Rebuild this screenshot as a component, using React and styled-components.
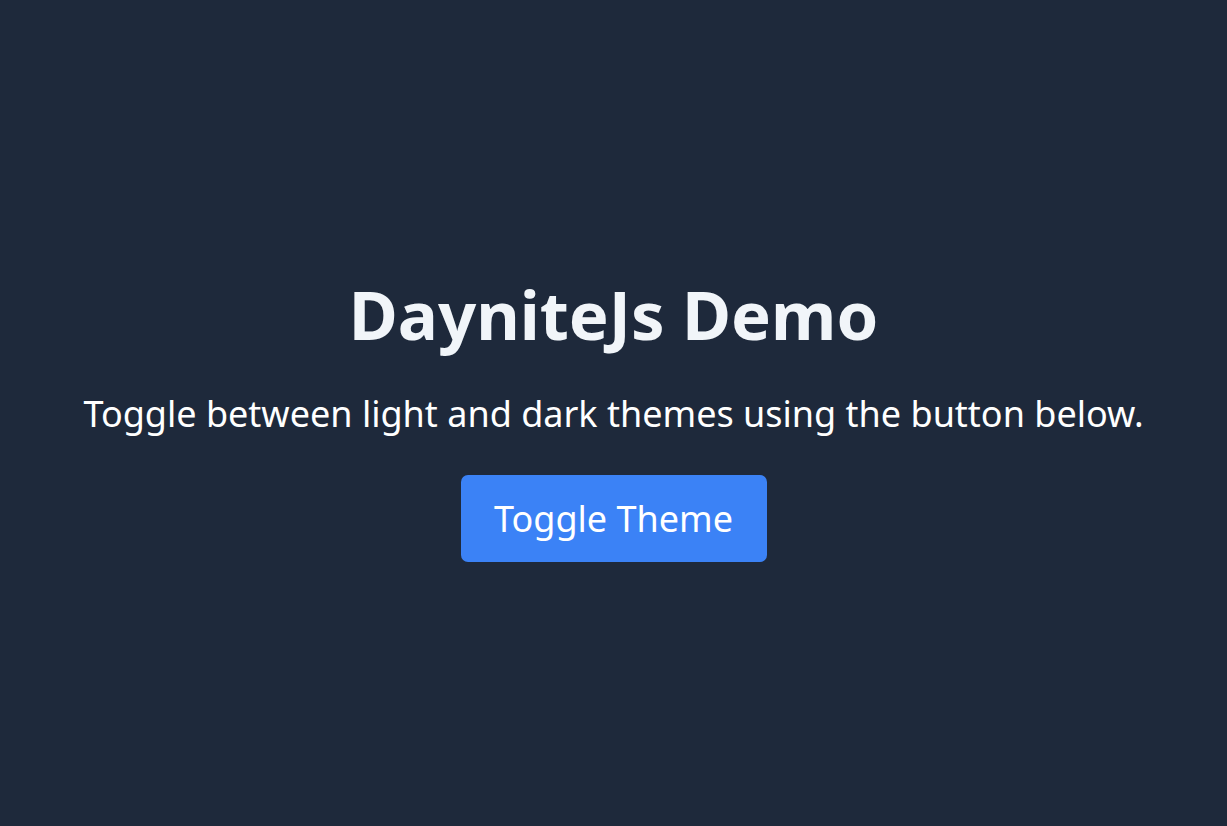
import React, { useState } from 'react';
import styled, { createGlobalStyle } from 'styled-components';

const GlobalStyle = createGlobalStyle`
  html, body {
    margin: 0;
    padding: 0;
  }
  body {
    background: ${(p) => (p.dark ? '#1e293b' : '#f8fafc')};
    font-family: "Noto Sans", "Open Sans", sans-serif;
  }
`;

const App = () => {
  const [dark, setDark] = useState(true);

  return (
    <>
      <GlobalStyle dark={dark} />
      <Page dark={dark}>
        <Title>DayniteJs Demo</Title>
        <Subtitle>Toggle between light and dark themes using the button below.</Subtitle>
        <ToggleButton onClick={() => setDark(!dark)}>Toggle Theme</ToggleButton>
      </Page>
    </>
  );
};

// START = STYLING
const Page = styled.div`
  box-sizing: border-box;
  min-height: 100vh;
  padding-top: 10px;
  display: flex;
  flex-direction: column;
  align-items: center;
  justify-content: center;
  color: ${(p) => (p.dark ? '#f1f5f9' : '#1e293b')};
  text-align: center;
`;

const Title = styled.h1`
  margin: 0 0 35px;
  font-size: 67px;
  font-weight: 700;
  line-height: 1.2;
`;

const Subtitle = styled.p`
  margin: 0 0 36px;
  font-size: 36px;
  line-height: 1.4;
  color: #ffffff;
`;

const ToggleButton = styled.button`
  background: #3b82f6;
  color: #ffffff;
  border: none;
  border-radius: 7px;
  width: 306px;
  height: 87px;
  font-family: inherit;
  font-size: 36px;
  cursor: pointer;
`;

export default App;
